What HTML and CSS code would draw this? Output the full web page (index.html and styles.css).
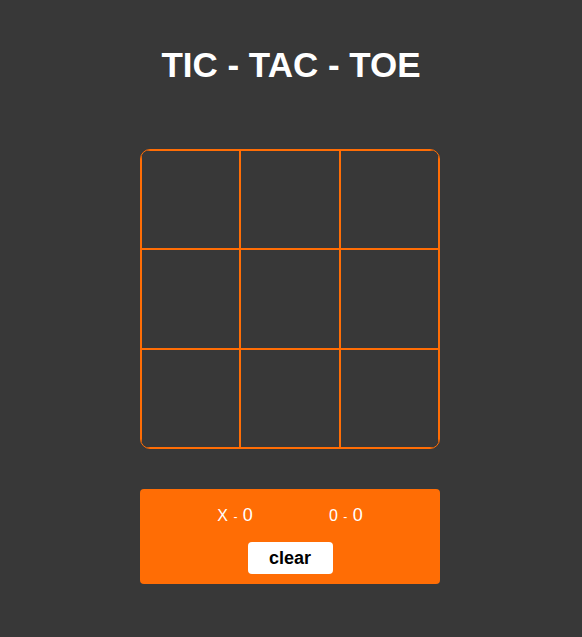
FILE: index.html
```html
<!DOCTYPE html>
<html>
<head>
<meta charset="utf-8">
<link rel="stylesheet" href="styles.css">
</head>
<body>
<div class="app">
  <h1 class="title">TIC - TAC - TOE</h1>
  <div class="board">
    <div class="cell"></div><div class="cell"></div><div class="cell"></div>
    <div class="cell"></div><div class="cell"></div><div class="cell"></div>
    <div class="cell"></div><div class="cell"></div><div class="cell"></div>
  </div>
  <div class="panel">
    <div class="scores">
      <span class="score-item"><span class="player">X</span> <span class="sep">-</span> <span class="points">0</span></span>
      <span class="score-item"><span class="player">0</span> <span class="sep">-</span> <span class="points">0</span></span>
    </div>
    <button class="clear">clear</button>
  </div>
</div>
</body>
</html>
```
FILE: styles.css
```css
html, body {
  margin: 0;
  padding: 0;
  background: #383838;
}
body {
  font-family: "Liberation Sans", Arial, sans-serif;
}
.app {
  display: flex;
  flex-direction: column;
  align-items: center;
  padding-top: 45px;
}
.title {
  margin: 0;
  font-size: 35px;
  line-height: 40px;
  font-weight: bold;
  color: #ffffff;
}
.board {
  margin-top: 64px;
  width: 300px;
  height: 300px;
  box-sizing: border-box;
  border: 1px solid #ff6d05;
  border-radius: 10px;
  display: grid;
  grid-template-columns: repeat(3, 1fr);
  grid-template-rows: repeat(3, 1fr);
  overflow: hidden;
  transform: translateX(-1px);
}
.cell {
  border: 1px solid #ff6d05;
}
.panel {
  margin-top: 40px;
  width: 300px;
  height: 95px;
  box-sizing: border-box;
  background: #ff6d05;
  border-radius: 4px;
  padding: 16px 0 10px;
  display: flex;
  flex-direction: column;
  align-items: center;
  transform: translateX(-1px);
}
.scores {
  display: flex;
  gap: 76px;
  height: 20px;
  line-height: 20px;
  color: #ffffff;
  font-size: 16px;
  word-spacing: 1px;
}
.sep {
  font-size: 12px;
}
.points {
  font-size: 18px;
}
.clear {
  margin-top: 17px;
  width: 85px;
  height: 32px;
  border: none;
  border-radius: 4px;
  background: #ffffff;
  color: #000000;
  font-family: "Liberation Sans", Arial, sans-serif;
  font-weight: bold;
  font-size: 18px;
  padding: 0;
}
```
